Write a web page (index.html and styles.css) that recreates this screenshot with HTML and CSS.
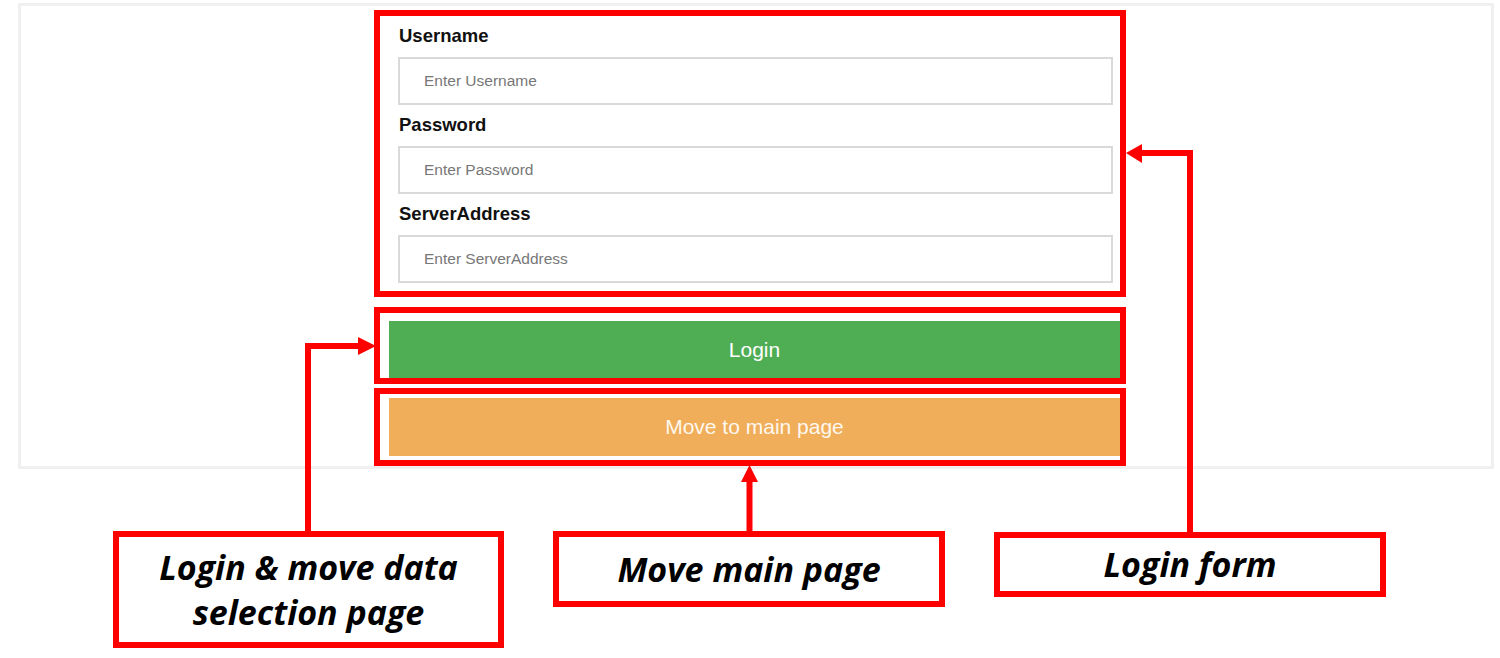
FILE: index.html
```html
<!DOCTYPE html>
<html lang="en">
<head>
<meta charset="utf-8">
<title>Login</title>
<link rel="stylesheet" href="styles.css">
</head>
<body>
<div class="panel">
  <div class="col">
    <form class="hl hl-form">
      <label class="lbl">Username</label>
      <input class="field" type="text" placeholder="Enter Username">
      <label class="lbl">Password</label>
      <input class="field" type="password" placeholder="Enter Password">
      <label class="lbl">ServerAddress</label>
      <input class="field last" type="text" placeholder="Enter ServerAddress">
    </form>
    <div class="hl hl-login"><button class="btn btn-green" type="button">Login</button></div>
    <div class="hl hl-move"><button class="btn btn-orange" type="button">Move to main page</button></div>
  </div>
</div>
<div class="notes">
  <div class="note n1">Login &amp; move data<br>selection page</div>
  <div class="note n2">Move main page</div>
  <div class="note n3">Login form</div>
</div>
<svg class="arrows" width="1500" height="658" viewBox="0 0 1500 658">
  <g fill="none" stroke="#ff0000" stroke-width="6" stroke-linejoin="miter" stroke-linecap="butt">
    <polyline points="308,531 308,346 362,346"/>
    <polyline points="749.5,531 749.5,480"/>
    <polyline points="1190,532 1190,153 1140,153"/>
  </g>
  <g fill="#ff0000">
    <polygon points="358,337 376,346 358,355"/>
    <polygon points="749.5,465 758,482 741,482"/>
    <polygon points="1126,153 1142,144 1142,163"/>
  </g>
</svg>
</body>
</html>
```
FILE: styles.css
```css
html, body {
  margin: 0;
  padding: 0;
}
body {
  position: relative;
  width: 1500px;
  height: 658px;
  overflow: hidden;
  background: #ffffff;
  font-family: "Liberation Sans", Arial, sans-serif;
  color: #111;
}
.panel {
  margin: 3px 6px 0 18px;
  border: 3px solid #f0f0f0;
  height: 460px;
}
.col {
  width: 752px;
  margin: 4px 0 0 353px;
}
.hl {
  border: 6px solid #ff0000;
  box-sizing: border-box;
}
.hl-form {
  display: block;
  height: 287px;
  margin: 0;
  padding: 10px 7px 8px 18px;
}
.lbl {
  display: block;
  font-weight: 700;
  font-size: 18.5px;
  line-height: 20px;
  margin: 0 0 11px 1px;
  color: #111;
}
.field {
  display: block;
  width: 100%;
  height: 48px;
  box-sizing: border-box;
  margin: 0 0 10px 0;
  padding: 0 0 0 24px;
  border: 2px solid #d9d9d9;
  border-radius: 0;
  font-family: "Liberation Sans", Arial, sans-serif;
  font-size: 15.5px;
  color: #333;
  background: #fff;
  outline: none;
}
.field.last { margin-bottom: 0; }
.field::placeholder { color: #777; }
.hl-login {
  margin-top: 10px;
  height: 77px;
  padding: 8px 0 0 9px;
}
.hl-move {
  margin-top: 4px;
  height: 78px;
  padding: 4px 0 4px 9px;
}
.btn {
  display: block;
  width: 100%;
  margin: 0;
  border: 0;
  font-family: "Liberation Sans", Arial, sans-serif;
  font-size: 21px;
  color: #ffffff;
  cursor: pointer;
}
.btn-green {
  height: 57px;
  background: #4fae54;
}
.btn-orange {
  height: 58px;
  background: #f0ad5a;
  color: #fff8ee;
}
.notes {
  display: flex;
  align-items: flex-start;
  gap: 49px;
  margin: 62px 0 0 113px;
}
.note {
  box-sizing: border-box;
  border: 6px solid #ff0000;
  display: flex;
  align-items: center;
  justify-content: center;
  text-align: center;
  font-family: "Open Sans", Lato, sans-serif;
  font-style: italic;
  font-weight: 700;
  font-size: 34px;
  line-height: 45px;
  color: #000;
}
.n1 { width: 391px; height: 117px; }
.n2 { width: 392px; height: 76px; }
.n3 { width: 392px; height: 65px; margin-top: 1px; }
.arrows {
  position: absolute;
  left: 0;
  top: 0;
  pointer-events: none;
}
```
